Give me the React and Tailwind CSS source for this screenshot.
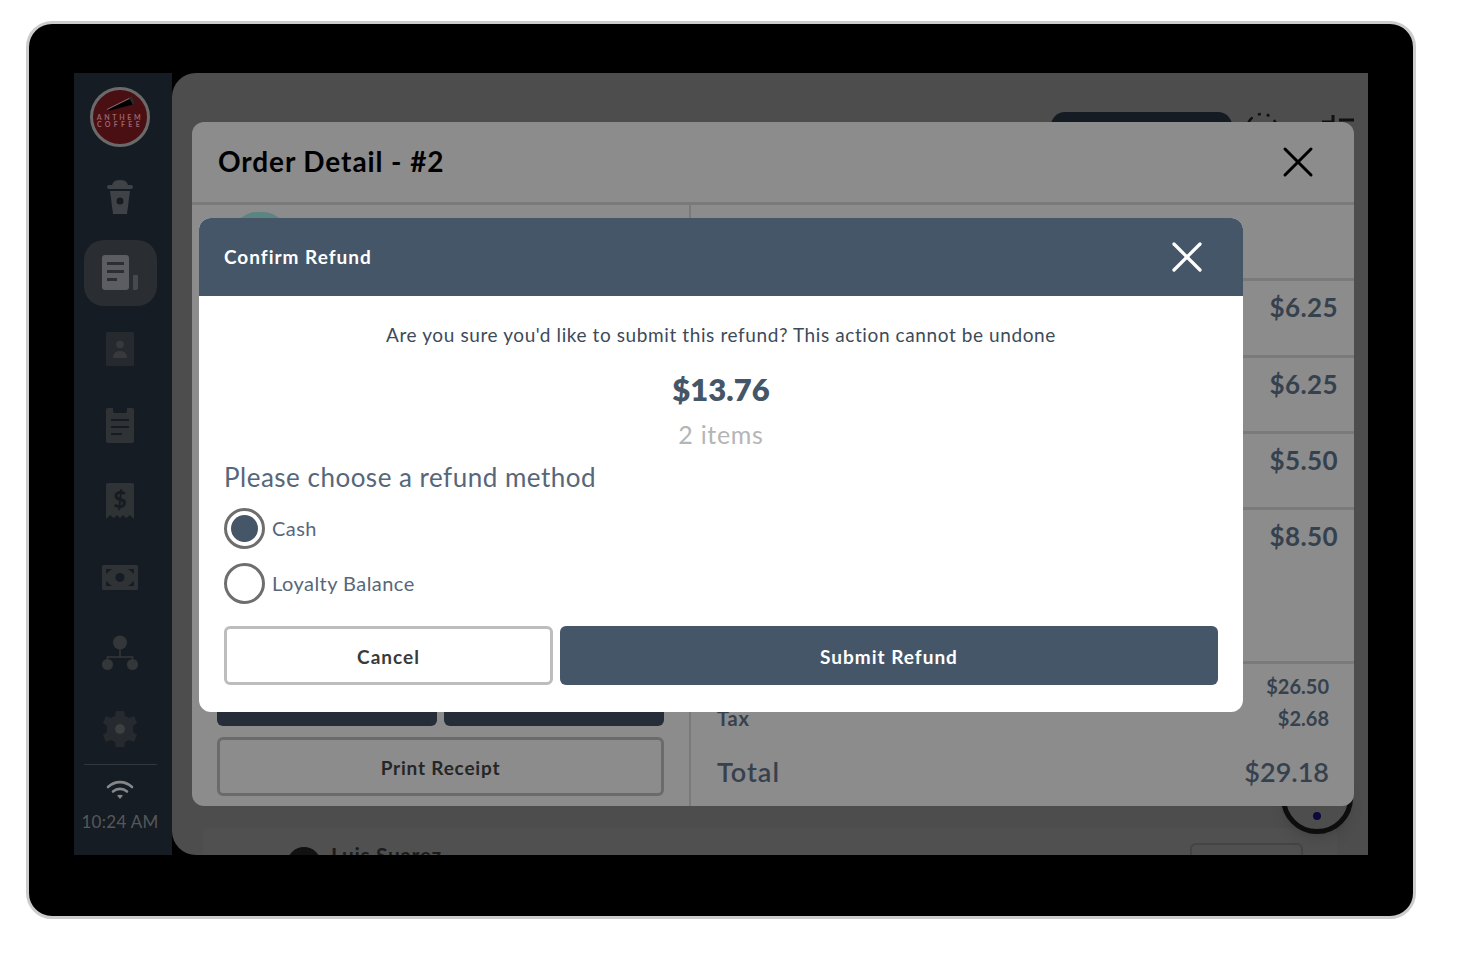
import { X } from 'lucide-react'

const font = { fontFamily: 'Lato, "Noto Sans", sans-serif' }

function CupIcon() {
  return (
    <svg width="28" height="36" viewBox="0 0 28 36" fill="#3f4246">
      <path d="M7 4c1-2 3-3 7-3s6 1 7 3l1 2H6z" />
      <rect x="1" y="6" width="26" height="4" rx="2" />
      <path d="M4 12h20l-3 23H7z" />
      <circle cx="14" cy="22" r="3.5" fill="#161c23" />
    </svg>
  )
}

function OrdersIcon() {
  return (
    <svg width="37" height="36" viewBox="0 0 37 36">
      <rect x="0" y="0" width="27" height="35" rx="3" fill="#5b5d60" />
      <rect x="5" y="7" width="17" height="3" fill="#2b2e32" />
      <rect x="5" y="15" width="17" height="3" fill="#2b2e32" />
      <rect x="5" y="23" width="10" height="3" fill="#2b2e32" />
      <path d="M31 20h4a1 1 0 0 1 1 1v12a2 2 0 0 1-2 2h-3z" fill="#46494d" />
    </svg>
  )
}

function ContactIcon() {
  return (
    <svg width="28" height="34" viewBox="0 0 28 34">
      <rect width="28" height="34" rx="1.5" fill="#26292d" />
      <circle cx="14" cy="12.5" r="3.8" fill="#37393c" />
      <path d="M7 26c0-5 3-7 7-7s7 2 7 7z" fill="#37393c" />
    </svg>
  )
}

function ClipboardIcon() {
  return (
    <svg width="28" height="36" viewBox="0 0 28 36">
      <path d="M2 1h5v3a2 2 0 0 0 2 2h10a2 2 0 0 0 2-2V1h5a2 2 0 0 1 2 2v31a2 2 0 0 1-2 2H2a2 2 0 0 1-2-2V3a2 2 0 0 1 2-2z" fill="#303336" />
      <path d="M5 13h18M5 20h18M5 27h11" stroke="#161c23" strokeWidth="2" />
    </svg>
  )
}

function ReceiptIcon() {
  return (
    <svg width="28" height="36" viewBox="0 0 28 36">
      <path d="M2 0h24a2 2 0 0 1 2 2v34l-4-4-4 3-3-3-3 3-3-3-3 3-4-3-4 4V2a2 2 0 0 1 2-2z" fill="#303336" />
      <text x="14" y="25" textAnchor="middle" fontSize="23" fontWeight="900" fill="#161c23" style={font}>$</text>
    </svg>
  )
}

function CashIcon() {
  return (
    <svg width="36" height="25" viewBox="0 0 36 25">
      <rect width="36" height="25" rx="1.5" fill="#303336" />
      <circle cx="18" cy="12.5" r="4.5" fill="#161c23" />
      <path d="M4 4h6L4 9zM32 4h-6l6 5zM4 21h6l-6-5zM32 21h-6l6-5z" fill="#161c23" />
    </svg>
  )
}

function OrgIcon() {
  return (
    <svg width="36" height="36" viewBox="0 0 36 36" fill="#34373a">
      <circle cx="18" cy="7.5" r="7" />
      <circle cx="5.5" cy="29.5" r="5.5" />
      <circle cx="30.5" cy="29.500" r="5.5" />
      <path d="M18 14v8M5.5 24v-2h25v2" fill="none" stroke="#34373a" strokeWidth="1.5" />
    </svg>
  )
}

function GearIcon() {
  return (
    <svg width="34" height="36" viewBox="0 0 34 36">
      <path d="M13 0h8l1 5 4 2 5-2 3 7-4 3v6l4 3-3 7-5-2-4 2-1 5h-8l-1-5-4-2-5 2-3-7 4-3v-6L0 12l3-7 5 2 4-2z" fill="#26292d" />
      <circle cx="17" cy="18" r="5" fill="#3d3f41" />
    </svg>
  )
}

function WifiIcon() {
  return (
    <svg width="28" height="20" viewBox="0 0 28 20" fill="none" stroke="#85878a" strokeWidth="2.6" strokeLinecap="round">
      <path d="M2 7c7-6.500 17-6.500 24 0" />
      <path d="M7 11.500c4-3.500 10-3.500 14 0" />
      <path d="M14 19l-3-3.500c2-1 4-1 6 0z" fill="#85878a" stroke="none" />
    </svg>
  )
}

function Logo() {
  return (
    <div className="relative flex h-[60px] w-[60px] flex-col items-center justify-end rounded-full border-[3px] border-[#6a6a6a] bg-[#4a0f13] pb-[16px]">
      <svg className="absolute left-[13px] top-[5px]" width="30" height="16" viewBox="0 0 30 16">
        <path d="M1 15L26 3l3 6L4 15.500z" fill="#000" />
        <path d="M1 14.500L25 2.500" stroke="#9a9a9a" strokeWidth="0.7" fill="none" />
        <path d="M23 3l3-2 3 8-2 1z" fill="#2a2a2a" />
      </svg>
      <span className="text-[7px] font-bold leading-[7px] tracking-[2.7px] text-[#9c6468]">ANTHEM</span>
      <span className="text-[7px] font-bold leading-[7px] tracking-[3.3px] text-[#9c6468]">COFFEE</span>
    </div>
  )
}

function Sidebar() {
  const items = [
    <CupIcon key="cup" />,
    <OrdersIcon key="orders" />,
    <ContactIcon key="contact" />,
    <ClipboardIcon key="clip" />,
    <ReceiptIcon key="receipt" />,
    <CashIcon key="cash" />,
    <OrgIcon key="org" />,
    <GearIcon key="gear" />,
  ]

  return (
    <div className="flex w-[98px] shrink-0 flex-col items-center bg-[#161c23] pr-[6px] pt-[14px]">
      <Logo />
      <div className="mt-[17px] flex flex-col gap-[10px]">
        {items.map((icon, i) => (
          <div
            key={i}
            className={`flex h-[66px] w-[73px] items-center justify-center rounded-[20px] ${i === 1 ? 'bg-[#2a2d31]' : ''}`}
          >
            {icon}
          </div>
        ))}
      </div>
      <div className="mt-[2px] h-px w-[73px] bg-[#33373c]" />
      <div className="mt-[15px] flex h-[20px] items-center">
        <WifiIcon />
      </div>
      <div className="mt-[12px] whitespace-nowrap text-[17px] leading-[20px] tracking-[0.3px] text-[#55585b]">10:24 AM</div>
    </div>
  )
}

function BackgroundPage() {
  return (
    <div className="relative min-w-0 flex-1 overflow-hidden rounded-l-[24px] bg-[#4d4d4d]">
      <div className="flex h-[755px] items-start justify-end pr-[14px] pt-[39px]">
        <div className="h-[50px] w-[181px] rounded-[14px] bg-[#151b22]" />
        <svg className="ml-[13px]" width="34" height="34" viewBox="0 0 34 34" fill="none" stroke="#111" strokeWidth="2.5">
          <circle cx="17" cy="17" r="15" strokeDasharray="60 6 3 6 3 6" />
        </svg>
        <svg className="ml-[43px] mt-[2px]" width="32" height="30" viewBox="0 0 32 30" fill="none" stroke="#111" strokeWidth="3">
          <path d="M0 8h11M11 1v14M17 6h15" />
        </svg>
      </div>
      <div className="ml-[31px] mr-[31px] flex h-[60px] items-start justify-between rounded-t-md bg-[#505050] pl-[84px] pr-[34px] pt-[15px]">
        <div className="flex items-start gap-[10px]">
          <div className="mt-[4px] h-[34px] w-[34px] rounded-full bg-[#111]" />
          <span className="text-[21px] font-bold leading-[24px] tracking-[0.6px] text-[#1c1c1c]">Luis Suarez</span>
        </div>
        <div className="h-[40px] w-[113px] rounded-md border-2 border-[#444]" />
      </div>
      <div className="absolute left-[1109px] top-[688px] flex h-[73px] w-[72px] items-center justify-center rounded-full border-[5px] border-[#0d0d0d] bg-[#4d4d4d] shadow-lg">
        <div className="mt-[36px] h-[8px] w-[8px] rounded-full bg-[#0c0a3a]" />
      </div>
    </div>
  )
}

function OrderDetailModal() {
  const prices = [
    { id: 1, amount: '$6.25', height: 'h-[77px]' },
    { id: 2, amount: '$6.25', height: 'h-[76px]' },
    { id: 3, amount: '$5.50', height: 'h-[76px]' },
    { id: 4, amount: '$8.50', height: 'h-[154px]' },
  ]

  return (
    <div className="absolute left-[118px] top-[49px] flex h-[684px] w-[1162px] flex-col overflow-hidden rounded-[12px] bg-[#8c8c8c]">
      <div className="flex h-[83px] shrink-0 items-center justify-between border-b-[3px] border-[#7a7a7a] pl-[26px] pr-[30px]">
        <h2 className="-mt-[2px] text-[28px] font-bold tracking-[0.9px] text-black">Order Detail - #2</h2>
        <X size={52} strokeWidth={1.4} color="#000" />
      </div>
      <div className="flex min-h-0 flex-1">
        <div className="flex w-[499px] flex-col justify-between border-r-[2px] border-[#7a7a7a] px-[25px] pb-[10px]">
          <div className="ml-[15px] mt-[7px] h-[50px] w-[56px] rounded-full bg-[#5a8580]" />
          <div className="flex flex-col gap-[11px]">
            <div className="flex gap-[7px]">
              <div className="h-[59px] flex-1 rounded-md bg-[#252d39]" />
              <div className="h-[59px] flex-1 rounded-md bg-[#252d39]" />
            </div>
            <button className="h-[59px] rounded-md border-[3px] border-[#6b6b6b] pt-[3px] text-[19px] font-bold tracking-[0.8px] text-[#262626]">
              Print Receipt
            </button>
          </div>
        </div>
        <div className="flex flex-1 flex-col">
          <div className="h-[73px]" />
          {prices.map(row => (
            <div
              key={row.id}
              className={`${row.height} border-t-[3px] border-[#7a7a7a] pr-[16px] pt-[10px] text-right text-[26px] font-bold leading-[32px] tracking-[0.4px] text-[#36414e]`}
            >
              {row.amount}
            </div>
          ))}
          <div className="flex flex-1 flex-col border-t-[3px] border-[#7a7a7a] px-[25px] pt-[6px] text-[#36414e]">
            <div className="flex h-[32px] items-center justify-between text-[20px] font-bold">
              <span>Subtotal</span>
              <span>$26.50</span>
            </div>
            <div className="flex h-[32px] items-center justify-between text-[20px] font-bold">
              <span className="ml-[1px] tracking-[0.8px]">Tax</span>
              <span>$2.68</span>
            </div>
            <div className="mt-[20px] flex h-[36px] items-center justify-between text-[27px] font-semibold">
              <span className="ml-[1px] tracking-[1px]">Total</span>
              <span>$29.18</span>
            </div>
          </div>
        </div>
      </div>
    </div>
  )
}

function RadioOption({ label, checked }) {
  return (
    <label className="flex h-[41px] items-center gap-[7px]">
      <span className="flex h-[41px] w-[41px] items-center justify-center rounded-full border-[3px] border-[#6e6e6e]">
        {checked && <span className="h-[27px] w-[27px] rounded-full bg-[#455668]" />}
      </span>
      <span className="-mt-[1px] text-[20px] tracking-[0.45px] text-[#56677a]">{label}</span>
    </label>
  )
}

function ConfirmRefundModal() {
  return (
    <div className="absolute left-[125px] top-[145px] flex h-[494px] w-[1044px] flex-col overflow-hidden rounded-[12px] bg-white">
      <div className="flex h-[78px] shrink-0 items-center justify-between bg-[#455668] pl-[25px] pr-[30px]">
        <h3 className="text-[19px] font-bold tracking-[1px] text-white">Confirm Refund</h3>
        <X size={52} strokeWidth={1.5} color="#fff" />
      </div>
      <div className="flex flex-1 flex-col px-[25px]">
        <p className="mt-[27px] text-center text-[19px] leading-[24px] tracking-[0.6px] text-[#3d4a59]">
          Are you sure you'd like to submit this refund? This action cannot be undone
        </p>
        <p className="mt-[22px] text-center text-[31px] font-extrabold leading-[40px] text-[#455668]">$13.76</p>
        <p className="mt-[9px] text-center text-[25px] leading-[32px] tracking-[0.7px] text-[#b5b5b5]">2 items</p>
        <p className="mt-[10px] text-[26px] leading-[34px] tracking-[0.5px] text-[#56677a]">Please choose a refund method</p>
        <div className="mt-[14px] flex flex-col gap-[14px]">
          <RadioOption label="Cash" checked />
          <RadioOption label="Loyalty Balance" />
        </div>
        <div className="mt-[22px] flex gap-[7px]">
          <button className="h-[59px] w-[329px] rounded-md border-[3px] border-[#bdbdbd] bg-white pt-[3px] text-[19px] font-bold tracking-[1px] text-[#3a3a3a]">
            Cancel
          </button>
          <button className="h-[59px] flex-1 rounded-md bg-[#455668] pt-[3px] text-[19px] font-bold tracking-[1px] text-white">
            Submit Refund
          </button>
        </div>
      </div>
    </div>
  )
}

export default function App() {
  return (
    <div className="min-h-screen bg-white pl-[26px] pt-[21px]" style={font}>
      <div className="h-[898px] w-[1390px] rounded-[26px] border-[3px] border-[#cccccc] bg-black pl-[45px] pt-[49px]">
        <div className="relative flex h-[782px] w-[1294px] overflow-hidden">
          <Sidebar />
          <BackgroundPage />
          <OrderDetailModal />
          <ConfirmRefundModal />
        </div>
      </div>
    </div>
  )
}
